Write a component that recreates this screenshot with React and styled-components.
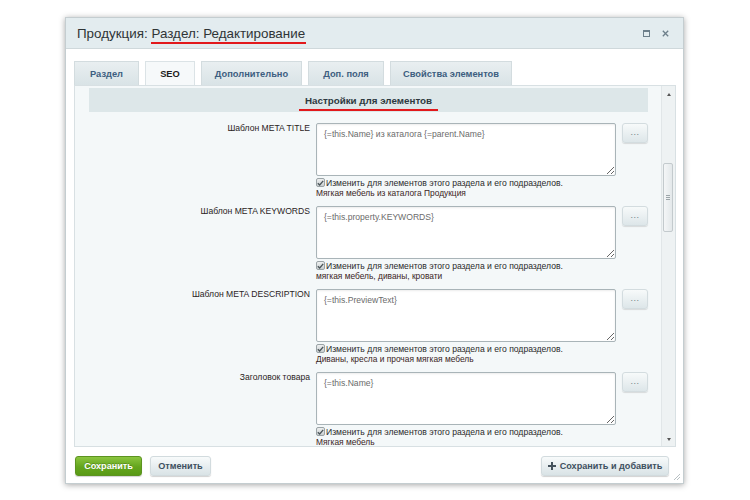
import React from "react";
import styled, { createGlobalStyle } from "styled-components";

const GlobalStyle = createGlobalStyle`
  html, body {
    margin: 0;
    padding: 0;
    background: #fff;
  }
  body {
    font-family: "Liberation Sans", Arial, sans-serif;
  }
`;

const Page = styled.div`
  width: 750px;
  height: 500px;
  padding: 17px 0 0 65px;
  box-sizing: border-box;
`;

const Window = styled.div`
  width: 619px;
  height: 467px;
  box-sizing: border-box;
  background: #fff;
  border: 1px solid #c4cdd0;
  box-shadow: 0 1px 6px rgba(0, 0, 0, 0.35);
  display: flex;
  flex-direction: column;
  position: relative;
`;

const Header = styled.div`
  height: 30px;
  flex: none;
  background: #e3ecef;
  border-bottom: 1px solid #cfd8db;
  display: flex;
  align-items: center;
  padding: 0 14px 0 11px;
`;

const Title = styled.div`
  flex: 1;
  font-size: 13.4px;
  color: #2f3436;
  padding-top: 1px;
`;

const Marked = styled.span`
  display: inline-block;
  line-height: 15px;
  border-bottom: 2px solid #e2191c;
  padding: 0 1px 1px 0;
  margin-bottom: -3px;
`;

const HeaderIcons = styled.div`
  display: flex;
  align-items: center;
  gap: 12px;
`;

const Body = styled.div`
  flex: 1;
  display: flex;
  flex-direction: column;
  padding: 12px 7px 0 8px;
`;

const Tabs = styled.div`
  display: flex;
  height: 24px;
  gap: 6px;
`;

const Tab = styled.div`
  height: 24px;
  box-sizing: border-box;
  width: ${(p) => p.$w}px;
  display: flex;
  align-items: center;
  justify-content: center;
  font-size: 9.3px;
  font-weight: bold;
  border: 1px solid ${(p) => (p.$active ? "#dbe3e6" : "#d3dcdf")};
  border-bottom: none;
  color: ${(p) => (p.$active ? "#1d1d1d" : "#3d5e80")};
  background: ${(p) =>
    p.$active
      ? "#f6f9fa"
      : "linear-gradient(to bottom, #e9eff1 0%, #d9e3e6 100%)"};
`;

const Panel = styled.div`
  height: 362px;
  box-sizing: border-box;
  border: 1px solid #d8e0e3;
  background: #f4f8f9;
  display: flex;
`;

const Content = styled.div`
  flex: 1;
  overflow: hidden;
  padding: 2px 13px 0 14px;
`;

const SectionBar = styled.div`
  height: 24px;
  background: #dde7e9;
  display: flex;
  align-items: center;
  justify-content: center;
  font-size: 9.8px;
  font-weight: bold;
  color: #2e3a3f;
  margin-bottom: 11px;
`;

const SectionTitle = styled.span`
  display: inline-block;
  padding: 0 6px 2px;
  line-height: 12px;
  border-bottom: 2px solid #e2191c;
  margin-bottom: -5px;
`;

const Row = styled.div`
  display: grid;
  grid-template-columns: 221px 300px 26px;
  column-gap: 6px;
  margin-bottom: 7px;
`;

const Label = styled.div`
  text-align: right;
  font-size: 8.6px;
  line-height: 10px;
  color: #2b2424;
`;

const Field = styled.div`
  display: flex;
  flex-direction: column;
`;

const Area = styled.textarea`
  width: 300px;
  height: 53px;
  box-sizing: border-box;
  border: 1px solid #a9b4b8;
  border-radius: 2px;
  background: #fff;
  font-family: "Liberation Sans", Arial, sans-serif;
  font-size: 8.6px;
  line-height: 10px;
  color: #6b6b6b;
  padding: 5px 7px;
  margin: 0;
  resize: both;
  box-shadow: inset 0 1px 2px rgba(0, 0, 0, 0.08);
  outline: none;
`;

const CheckLine = styled.div`
  display: flex;
  align-items: center;
  height: 11px;
  margin-top: 1px;
  font-size: 8.6px;
  color: #2a2a2a;
  gap: 1px;
`;

const Box = styled.span`
  width: 9px;
  height: 9px;
  box-sizing: border-box;
  border: 1px solid #9aa3a6;
  border-radius: 2px;
  background: linear-gradient(#eef0f0, #c9cfd1);
  display: inline-flex;
  align-items: center;
  justify-content: center;
`;

const Hint = styled.div`
  font-size: 8.4px;
  color: #3a1d1d;
  height: 11px;
  line-height: 11px;
`;

const MoreButton = styled.div`
  width: 26px;
  height: 20px;
  box-sizing: border-box;
  border-radius: 3px;
  border: 1px solid #d3dcdf;
  background: linear-gradient(to bottom, #f7fafa, #dde6e9);
  box-shadow: 0 1px 1px rgba(0, 0, 0, 0.12);
  display: flex;
  align-items: center;
  justify-content: center;
  font-size: 9px;
  color: #6f7f86;
  letter-spacing: 0.5px;
  padding-bottom: 3px;
`;

const Scrollbar = styled.div`
  width: 13px;
  flex: none;
  background: #eef2f3;
  border-left: 1px solid #e1e6e8;
  display: flex;
  flex-direction: column;
  align-items: center;
  position: relative;
`;

const Arrow = styled.div`
  width: 0;
  height: 0;
  border-left: 2px solid transparent;
  border-right: 2px solid transparent;
  ${(p) =>
    p.$down
      ? "border-top: 3px solid #555; margin-top: auto; margin-bottom: 5px;"
      : "border-bottom: 3px solid #555; margin-top: 7px;"}
`;

const Thumb = styled.div`
  position: absolute;
  top: 77px;
  left: 1px;
  width: 10px;
  height: 69px;
  box-sizing: border-box;
  border: 1px solid #c3cacd;
  border-radius: 2px;
  background: linear-gradient(to right, #f4f6f7, #e3e8ea);
  display: flex;
  flex-direction: column;
  align-items: center;
  justify-content: center;
  gap: 1px;
  & span {
    width: 4px;
    height: 1px;
    background: #9ca5a9;
  }
`;

const Footer = styled.div`
  display: flex;
  align-items: center;
  padding: 9px 7px 0 1px;
`;

const Button = styled.div`
  width: ${(p) => p.$w}px;
  height: 20px;
  box-sizing: border-box;
  margin-right: ${(p) => p.$mr || 0}px;
  border-radius: 3px;
  display: flex;
  align-items: center;
  justify-content: center;
  gap: 4px;
  font-size: 9.1px;
  font-weight: bold;
  box-shadow: 0 1px 1px rgba(0, 0, 0, 0.18);
  color: ${(p) => (p.$green ? "#fff" : "#3e5060")};
  border: 1px solid ${(p) => (p.$green ? "#5c9320" : "#d2dbde")};
  background: ${(p) =>
    p.$green
      ? "linear-gradient(to bottom, #8bc53f 0%, #64a51d 55%, #599a16 100%)"
      : "linear-gradient(to bottom, #f8fbfb 0%, #e8eef0 50%, #d9e3e6 100%)"};
  text-shadow: ${(p) => (p.$green ? "0 -1px 0 rgba(0,0,0,0.2)" : "none")};
`;

const Spacer = styled.div`
  flex: 1;
`;

const Grip = styled.svg`
  position: absolute;
  right: 2px;
  bottom: 2px;
`;

const fields = [
  {
    label: "Шаблон META TITLE",
    value: "{=this.Name} из каталога {=parent.Name}",
    hint: "Мягкая мебель из каталога Продукция",
  },
  {
    label: "Шаблон META KEYWORDS",
    value: "{=this.property.KEYWORDS}",
    hint: "мягкая мебель, диваны, кровати",
  },
  {
    label: "Шаблон META DESCRIPTION",
    value: "{=this.PreviewText}",
    hint: "Диваны, кресла и прочая мягкая мебель",
  },
  {
    label: "Заголовок товара",
    value: "{=this.Name}",
    hint: "Мягкая мебель",
  },
];

const tabs = [
  { title: "Раздел", w: 65 },
  { title: "SEO", w: 50, active: true },
  { title: "Дополнительно", w: 101 },
  { title: "Доп. поля", w: 76 },
  { title: "Свойства элементов", w: 122 },
];

const Check = () => (
  <Box>
    <svg width="7" height="6" viewBox="0 0 7 6">
      <path d="M0.8 3.2 L2.7 5 L6.2 0.8" stroke="#4a5458" strokeWidth="1.3" fill="none" />
    </svg>
  </Box>
);

export default function App() {
  return (
    <>
      <GlobalStyle />
      <Page>
        <Window>
          <Header>
            <Title>
              Продукция: <Marked>Раздел: Редактирование</Marked>
            </Title>
            <HeaderIcons>
              <svg width="7" height="7" viewBox="0 0 7 7">
                <rect x="0.5" y="0.5" width="6" height="6" fill="none" stroke="#6d7f8a" />
                <rect x="0.5" y="0.5" width="6" height="1.5" fill="#6d7f8a" />
              </svg>
              <svg width="7" height="7" viewBox="0 0 7 7">
                <path d="M0.8 0.8 L6.2 6.2 M6.2 0.8 L0.8 6.2" stroke="#6d7f8a" strokeWidth="1.3" />
              </svg>
            </HeaderIcons>
          </Header>
          <Body>
            <Tabs>
              {tabs.map((t) => (
                <Tab key={t.title} $w={t.w} $active={t.active}>
                  {t.title}
                </Tab>
              ))}
            </Tabs>
            <Panel>
              <Content>
                <SectionBar>
                  <SectionTitle>Настройки для элементов</SectionTitle>
                </SectionBar>
                {fields.map((f) => (
                  <Row key={f.label}>
                    <Label>{f.label}</Label>
                    <Field>
                      <Area readOnly value={f.value} />
                      <CheckLine>
                        <Check />
                        Изменить для элементов этого раздела и его подразделов.
                      </CheckLine>
                      <Hint>{f.hint}</Hint>
                    </Field>
                    <MoreButton>...</MoreButton>
                  </Row>
                ))}
              </Content>
              <Scrollbar>
                <Arrow />
                <Thumb>
                  <span />
                  <span />
                  <span />
                </Thumb>
                <Arrow $down />
              </Scrollbar>
            </Panel>
            <Footer>
              <Button $green $w={67} $mr={8}>
                Сохранить
              </Button>
              <Button $w={61}>Отменить</Button>
              <Spacer />
              <Button $w={128}>
                <svg width="8" height="8" viewBox="0 0 8 8">
                  <path d="M4 0 V8 M0 4 H8" stroke="#44525c" strokeWidth="2" />
                </svg>
                Сохранить и добавить
              </Button>
            </Footer>
          </Body>
          <Grip width="8" height="8" viewBox="0 0 8 8">
            <path d="M7 1 L1 7 M7 4 L4 7" stroke="#b8c0c3" strokeWidth="1" />
          </Grip>
        </Window>
      </Page>
    </>
  );
}
